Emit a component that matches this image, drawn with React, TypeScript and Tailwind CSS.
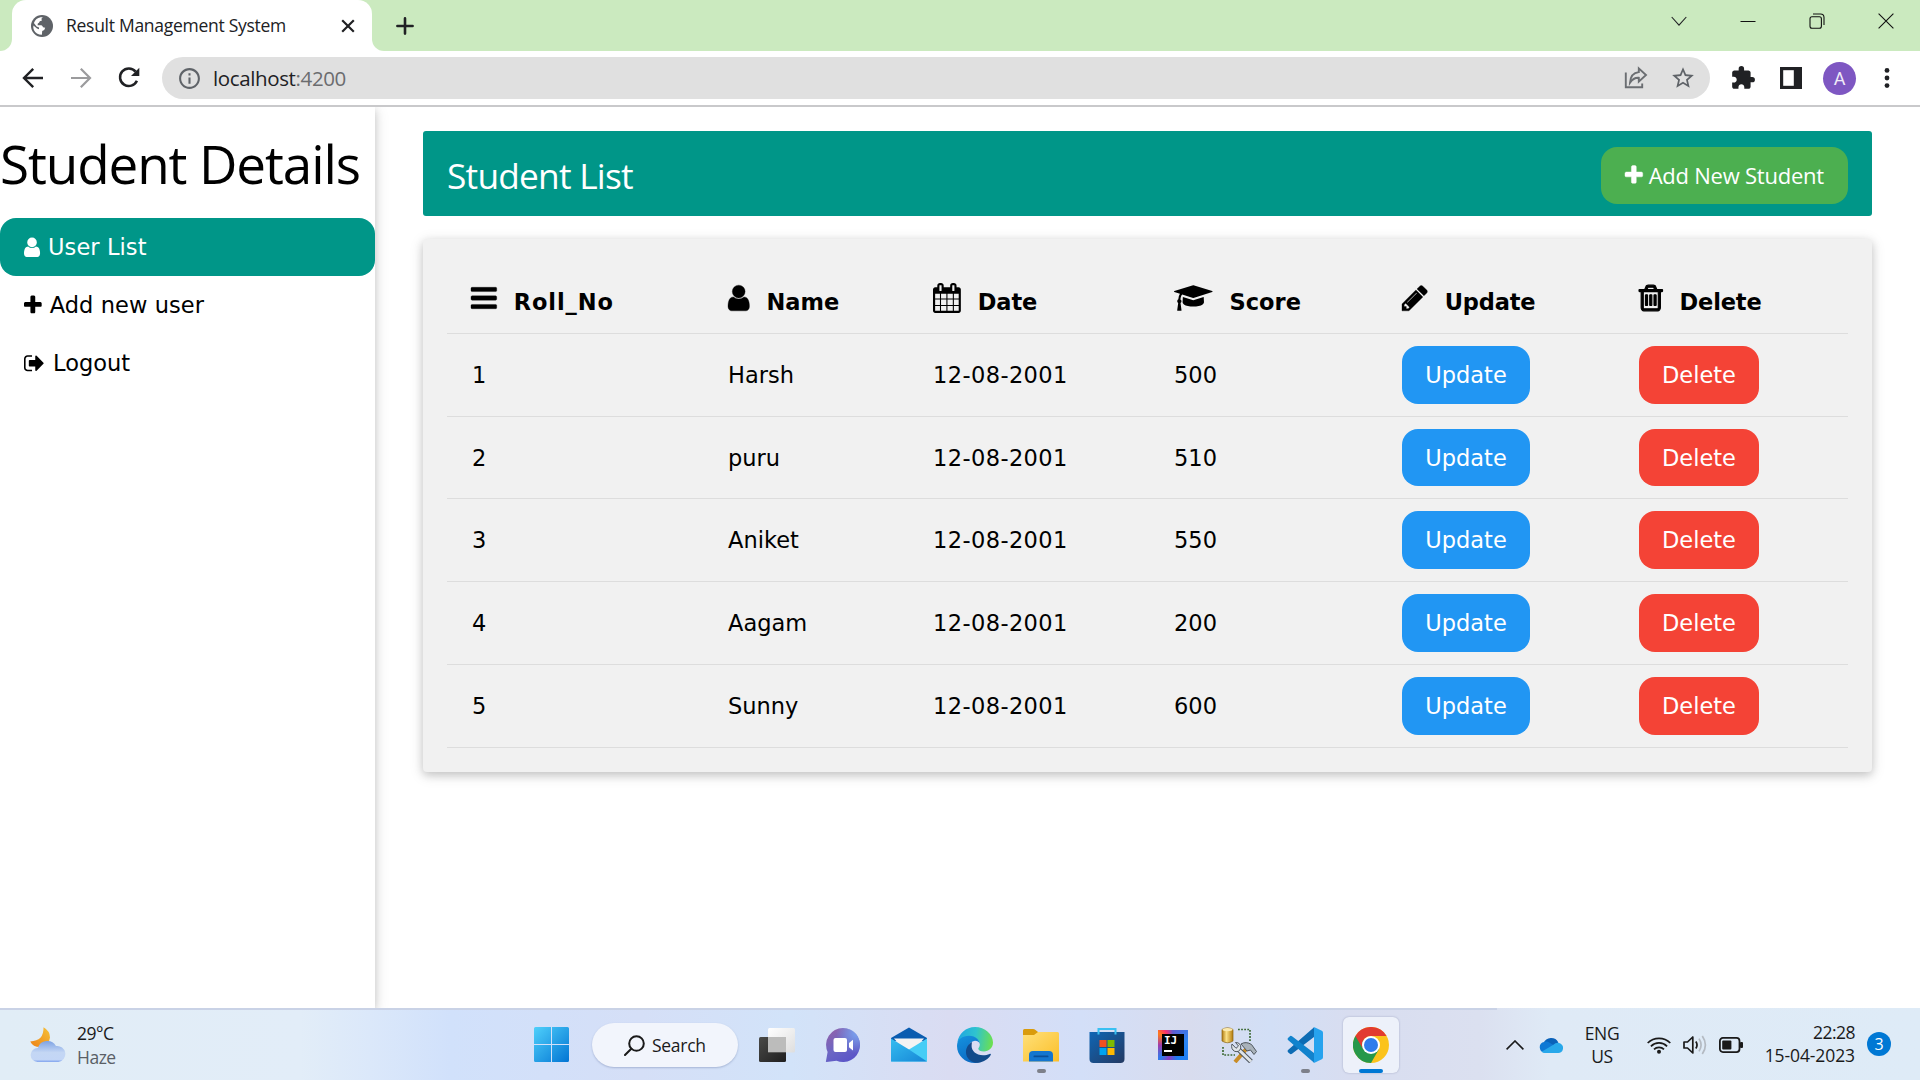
import React from "react";
import { MdExtension, MdStarBorder, MdInfoOutline } from "react-icons/md";

const P = {
  bars: "M1664 1344v128q0 26-19 45t-45 19h-1408q-26 0-45-19t-19-45v-128q0-26 19-45t45-19h1408q26 0 45 19t19 45zm0-512v128q0 26-19 45t-45 19h-1408q-26 0-45-19t-19-45v-128q0-26 19-45t45-19h1408q26 0 45 19t19 45zm0-512v128q0 26-19 45t-45 19h-1408q-26 0-45-19t-19-45v-128q0-26 19-45t45-19h1408q26 0 45 19t19 45z",
  user: "M1536 1399q0 109-62.5 187t-150.5 78h-854q-88 0-150.5-78t-62.5-187q0-85 8.5-160.5t31.5-152 58.5-131 94-89 134.5-34.5q131 128 313 128t313-128q76 0 134.5 34.5t94 89 58.5 131 31.5 152 8.5 160.5zm-256-887q0 159-112.5 271.5t-271.5 112.5-271.5-112.5-112.5-271.5 112.5-271.5 271.5-112.5 271.5 112.5 112.5 271.5z",
  plus: "M1600 736v192q0 40-28 68t-68 28h-416v416q0 40-28 68t-68 28h-192q-40 0-68-28t-28-68v-416h-416q-40 0-68-28t-28-68v-192q0-40 28-68t68-28h416v-416q0-40 28-68t68-28h192q40 0 68 28t28 68v416h416q40 0 68 28t28 68z",
  calendar: "M192 1664h288v-288h-288v288zm352 0h320v-288h-320v288zm-352-352h288v-320h-288v320zm352 0h320v-320h-320v320zm-352-384h288v-288h-288v288zm736 736h320v-288h-320v288zm-384-736h320v-288h-320v288zm768 736h288v-288h-288v288zm-384-352h320v-320h-320v320zm-352-864v-288q0-13-9.5-22.5t-22.5-9.5h-64q-13 0-22.5 9.5t-9.5 22.5v288q0 13 9.5 22.5t22.5 9.5h64q13 0 22.5-9.5t9.5-22.5zm736 864h288v-320h-288v320zm-384-384h320v-288h-320v288zm384 0h288v-288h-288v288zm32-480v-288q0-13-9.5-22.5t-22.5-9.5h-64q-13 0-22.5 9.5t-9.5 22.5v288q0 13 9.5 22.5t22.5 9.5h64q13 0 22.5-9.5t9.5-22.5zm384-64v1280q0 52-38 90t-90 38h-1408q-52 0-90-38t-38-90v-1280q0-52 38-90t90-38h128v-96q0-66 47-113t113-47h64q66 0 113 47t47 113v96h384v-96q0-66 47-113t113-47h64q66 0 113 47t47 113v96h128q52 0 90 38t38 90z",
  cap: "M1774 836l18 316q4 69-82 128t-235 93.5-323 34.5-323-34.5-235-93.5-82-128l18-316 574 181q22 7 48 7t48-7zm530-324q0 23-22 31l-1120 352q-4 1-10 1t-10-1l-652-206q-43 34-71 111.5t-34 178.5q63 36 63 109 0 69-58 107l58 433q2 14-8 25-9 11-24 11h-192q-15 0-24-11-10-11-8-25l58-433q-58-38-58-107 0-73 65-111 11-207 98-330l-333-104q-22-8-22-31t22-31l1120-352q4-1 10-1t10 1l1120 352q22 8 22 31z",
  pencil: "M491 1536l91-91-235-235-91 91v107h128v128h107zm523-928q0-22-22-22-10 0-17 7l-542 542q-7 7-7 17 0 22 22 22 10 0 17-7l542-542q7-7 7-17zm-54-192l416 416-832 832h-416v-416zm683 96q0 53-37 90l-166 166-416-416 166-165q36-38 90-38 53 0 91 38l235 234q37 39 37 91z",
  trash: "M704 736v576q0 14-9 23t-23 9h-64q-14 0-23-9t-9-23v-576q0-14 9-23t23-9h64q14 0 23 9t9 23zm256 0v576q0 14-9 23t-23 9h-64q-14 0-23-9t-9-23v-576q0-14 9-23t23-9h64q14 0 23 9t9 23zm256 0v576q0 14-9 23t-23 9h-64q-14 0-23-9t-9-23v-576q0-14 9-23t23-9h64q14 0 23 9t9 23zm128 724v-948h-896v948q0 22 7 40.5t14.5 27 10.5 8.5h832q3 0 10.5-8.5t14.5-27 7-40.5zm-672-1076h448l-48-117q-7-9-17-11h-317q-10 2-17 11zm928 32v64q0 14-9 23t-23 9h-96v948q0 83-47 143.5t-113 60.5h-832q-66 0-113-58.5t-47-141.5v-952h-96q-14 0-23-9t-9-23v-64q0-14 9-23t23-9h309l70-167q15-37 54-63t79-26h320q40 0 79 26t54 63l70 167h309q14 0 23 9t9 23z",
  signOut: "M704 1440q0 4 1 20t.5 26.5-3 23.5-10 19.5-20.5 6.5h-320q-119 0-203.5-84.5t-84.5-203.5v-704q0-119 84.5-203.5t203.5-84.5h320q13 0 22.5 9.5t9.5 22.5q0 4 1 20t.5 26.5-3 23.5-10 19.5-20.5 6.5h-320q-66 0-113 47t-47 113v704q0 66 47 113t113 47h312l11.5 1 11.5 3 8 5.5 7 9 2 13.5zm928-544q0 26-19 45l-544 544q-19 19-45 19t-45-19-19-45v-288h-448q-26 0-45-19t-19-45v-384q0-26 19-45t45-19h448v-288q0-26 19-45t45-19 45 19l544 544q19 19 19 45z",
};

const BOX: Record<keyof typeof P, [number, number]> = {
  bars: [128, 1536],
  user: [256, 1280],
  plus: [192, 1408],
  calendar: [64, 1664],
  cap: [0, 2304],
  pencil: [128, 1536],
  trash: [192, 1408],
  signOut: [64, 1600],
};

function Fa({ name, size, stroke = 0 }: { name: keyof typeof P; size: number; stroke?: number }) {
  const [x, w] = BOX[name];
  return (
    <svg
      viewBox={`${x} 0 ${w} 1792`}
      width={(w / 1792) * size}
      height={size}
      fill="currentColor"
      stroke="currentColor"
      strokeWidth={stroke}
      className="shrink-0 overflow-visible"
    >
      <path d={P[name]} />
    </svg>
  );
}

/* ---------- browser chrome ---------- */

function TabStrip() {
  return (
    <div className="flex h-[51px] bg-white">
      <div className="h-full w-3 rounded-br-[12px] bg-[#cbeabf]" />
      <div className="h-full w-[360px] bg-[linear-gradient(#cbeabf_50%,#fff_50%)]">
        <div className="flex h-full items-center rounded-t-[14px] bg-white pl-[19px] pr-[17px]">
          <svg width="22" height="22" viewBox="0 0 22 22">
            <circle cx="11" cy="11" r="11" fill="#5f6368" />
            <path d="M12.2 2.3 Q9.6 3.4 11 5.4 L8.8 6.2 Q8.2 8.2 6.8 8.6 L6.6 10.2 L10.4 10.2 Q11.6 10.8 12 12.2 L14.2 12.8 Q13.8 15.6 11.2 16 L10.9 19.7 Q5 19.7 2.9 15 Q2 12.5 2.4 10.6 L6 13.6 L8 14.2 L8 12.6 L5.6 11.6 L2.9 8 Q4.8 3 9.6 2.2Z" fill="#fff" />
            <path d="M14.8 3.2 L14 6.2 L12.6 7.6 L14.4 9.6 L17 9 L19.6 11.5 Q19.8 6.2 14.8 3.2Z" fill="#5f6368" />
          </svg>
          <span className="mb-px ml-[13px] whitespace-nowrap font-['Open_Sans'] text-[17.5px] leading-6 tracking-[-0.28px] text-[#202124]">
            Result Management System
          </span>
          <svg className="ml-auto" width="14" height="14" viewBox="0 0 14 14" stroke="#202124" strokeWidth="2.2">
            <path d="M1.2 1.2 L12.8 12.8 M12.8 1.2 L1.2 12.8" />
          </svg>
        </div>
      </div>
      <div className="flex h-full flex-1 items-center rounded-bl-[12px] bg-[#cbeabf] pl-6 pr-[26px]">
        <svg width="18" height="18" viewBox="0 0 18 18" stroke="#202124" strokeWidth="2.6" strokeLinecap="round">
          <path d="M9 1.4 V16.6 M1.4 9 H16.6" />
        </svg>
        <div className="mb-[9px] ml-auto flex items-center gap-[53px]">
          <svg width="16" height="16" viewBox="0 0 16 16" fill="none" stroke="#202124" strokeWidth="1.1">
            <path d="M.7 4 L8 12.2 L15.3 4" />
          </svg>
          <svg width="16" height="16" viewBox="0 0 16 16" stroke="#111" strokeWidth="1">
            <path d="M.5 8.5 H15.5" />
          </svg>
          <svg width="16" height="16" viewBox="0 0 16 16" fill="none" stroke="#111" strokeWidth="1.1">
            <rect x="1" y="3.8" width="11.4" height="11.4" rx="2" />
            <path d="M4 1 H11.5 Q15 1 15 4.5 V12" />
          </svg>
          <svg width="16" height="16" viewBox="0 0 16 16" stroke="#111" strokeWidth="1.1">
            <path d="M.6 .6 L15.4 15.4 M15.4 .6 L.6 15.4" />
          </svg>
        </div>
      </div>
    </div>
  );
}

function Toolbar() {
  return (
    <div className="flex h-14 items-center border-b-2 border-[#c9c9cb] bg-white pl-[22px] pr-[30px]">
      <svg width="22" height="22" viewBox="0 0 22 22" fill="none" stroke="#202124" strokeWidth="2.4">
        <path d="M21 11 H2.5 M11.2 1.8 L2 11 L11.2 20.2" />
      </svg>
      <svg className="ml-[27px]" width="22" height="22" viewBox="0 0 22 22" fill="none" stroke="#9b9b9d" strokeWidth="2.2">
        <path d="M0 11 H18.6 M9.8 1.8 L19 11 L9.8 20.2" />
      </svg>
      <svg className="ml-[25px]" width="22" height="22" viewBox="0 0 22 22" fill="none" stroke="#202124" strokeWidth="2.5">
        <path d="M17.6 4.6 A8.8 8.8 0 1 0 18.9 13.8" />
        <path d="M21.3 0.8 V9 H13 Z" fill="#202124" stroke="none" />
      </svg>
      <div className="ml-[22px] flex h-[42px] w-[1548px] items-center rounded-full bg-[#e0e0e0] pl-[15px] pr-[14px]">
        <MdInfoOutline size={25} color="#5f6368" />
        <span className="ml-[11px] font-['Open_Sans'] text-[20.5px] leading-7 tracking-[-0.37px] text-[#202124]">
          localhost<span className="text-[#6b6c6f]">:4200</span>
        </span>
        <svg className="ml-auto" width="24" height="24" viewBox="0 0 24 24" fill="none" stroke="#6b6e72" strokeWidth="1.9">
          <path d="M1.8 6.5 V21.2 H18.2 V17.5" />
          <path d="M14.8 2.4 L22 9 L14.8 15.6 V11.8 Q9.5 11.4 6 16.8 Q6.6 6.9 14.8 6.1 Z" strokeLinejoin="miter" />
        </svg>
        <MdStarBorder className="ml-[22px]" size={26} color="#5f6368" />
      </div>
      <MdExtension className="ml-5" size={26} color="#202124" />
      <svg className="ml-6" width="22" height="22" viewBox="0 0 22 22">
        <rect width="22" height="22" fill="#202124" />
        <rect x="3.2" y="3.2" width="10.6" height="15.6" fill="#fff" />
      </svg>
      <div className="ml-[21px] flex size-[33px] items-center justify-center rounded-full bg-[#7e57c2] pt-px font-['Roboto'] text-lg leading-none text-[#f1ecf8]">
        A
      </div>
      <svg className="ml-auto" width="6" height="22" viewBox="0 0 6 22" fill="#202124">
        <circle cx="3" cy="3.4" r="2.4" />
        <circle cx="3" cy="11" r="2.4" />
        <circle cx="3" cy="18.6" r="2.4" />
      </svg>
    </div>
  );
}

/* ---------- page ---------- */

function Sidebar() {
  return (
    <aside className="z-10 h-full w-[375px] shrink-0 bg-white shadow-[0_3px_8px_rgba(0,0,0,.16),0_3px_15px_rgba(0,0,0,.12)]">
      <h1 className="h-[111px] whitespace-nowrap pt-[19px] font-['Open_Sans'] text-[53px] leading-[76px] tracking-[-1.1px]">
        Student Details
      </h1>
      <nav className="text-[22.5px] leading-[58px]">
        <a className="flex h-[58px] items-center gap-2 rounded-[16px] bg-[#009688] pl-6 text-white">
          <Fa name="user" size={22.5} />
          <span className="tracking-[0.08px]">User List</span>
        </a>
        <a className="flex h-[58px] items-center gap-2 pl-6">
          <Fa name="plus" size={22.5} />
          <span className="tracking-[0.08px]">Add new user</span>
        </a>
        <a className="flex h-[58px] items-center gap-[9px] pl-6">
          <Fa name="signOut" size={22.5} />
          <span>Logout</span>
        </a>
      </nav>
    </aside>
  );
}

const HEADS: { icon: keyof typeof P; stroke: number; label: string; cls: string }[] = [
  { icon: "bars", stroke: 20, label: "Roll_No", cls: "tracking-[0.9px]" },
  { icon: "user", stroke: 20, label: "Name", cls: "" },
  { icon: "calendar", stroke: 0, label: "Date", cls: "tracking-[-0.15px]" },
  { icon: "cap", stroke: 0, label: "Score", cls: "" },
  { icon: "pencil", stroke: 20, label: "Update", cls: "tracking-[-0.15px]" },
  { icon: "trash", stroke: 66, label: "Delete", cls: "tracking-[-0.15px]" },
];

const ROWS = [
  { no: 1, name: "Harsh", score: 500, h: "h-[83px]", btn: "h-[58px]" },
  { no: 2, name: "puru", score: 510, h: "h-[82px]", btn: "h-[57px]" },
  { no: 3, name: "Aniket", score: 550, h: "h-[83px]", btn: "h-[58px]" },
  { no: 4, name: "Aagam", score: 200, h: "h-[83px]", btn: "h-[58px]" },
  { no: 5, name: "Sunny", score: 600, h: "h-[83px]", btn: "h-[58px]" },
];

const COLS = "grid grid-cols-[257px_205px_241px_228px_237px_1fr] border-b border-[#dddddd] pl-6";

function StudentTable() {
  return (
    <section className="mt-[23px] h-[533px] rounded-[4px] bg-[#f1f1f1] px-6 pt-[25px] text-[22.5px] shadow-[0_3px_8px_rgba(0,0,0,.16),0_3px_15px_rgba(0,0,0,.12)]">
      <div className={`${COLS} h-[70px] font-bold`}>
        {HEADS.map((h) => (
          <div key={h.label} className="flex items-start gap-[17px] pt-[19px]">
            <Fa name={h.icon} size={30} stroke={h.stroke} />
            <span className={`pt-0.5 leading-[34px] ${h.cls}`}>{h.label}</span>
          </div>
        ))}
      </div>
      {ROWS.map((r) => (
        <div key={r.no} className={`${COLS} ${r.h} items-center`}>
          <span className="pl-px pt-0.5">{r.no}</span>
          <span className="pt-0.5">{r.name}</span>
          <span className="pt-0.5 tracking-[0.4px]">12-08-2001</span>
          <span className="pt-0.5">{r.score}</span>
          <button className={`${r.btn} flex w-32 items-center justify-center rounded-[16px] bg-[#2196f3] pt-0.5 text-white`}>Update</button>
          <button className={`${r.btn} flex w-[120px] items-center justify-center rounded-[16px] bg-[#f44336] pt-0.5 text-white`}>Delete</button>
        </div>
      ))}
    </section>
  );
}

/* ---------- taskbar icons ---------- */

const WindowsLogo = () => (
  <svg width="36" height="36" viewBox="0 0 36 36">
    <defs>
      <linearGradient id="win" x1="0" y1="0" x2="1" y2="1">
        <stop offset="0" stopColor="#4fd0fb" />
        <stop offset="1" stopColor="#0072d2" />
      </linearGradient>
      <clipPath id="winc">
        <path d="M0 1.5Q0 0 1.5 0H17V17H0zM18 0H33.5Q35 0 35 1.5V17H18zM0 18H17V35H1.5Q0 35 0 33.5zM18 18H35V33.5Q35 35 33.5 35H18z" />
      </clipPath>
    </defs>
    <rect width="36" height="36" fill="url(#win)" clipPath="url(#winc)" />
  </svg>
);

const TaskView = () => (
  <svg width="36" height="36" viewBox="0 0 36 36">
    <defs>
      <linearGradient id="tvd" x1="0" y1="0" x2="1" y2="1">
        <stop offset="0" stopColor="#4a4a48" />
        <stop offset="1" stopColor="#1f1f1f" />
      </linearGradient>
      <linearGradient id="tvl" x1="0" y1="0" x2="1" y2="1">
        <stop offset="0" stopColor="#ffffff" />
        <stop offset="1" stopColor="#dedede" />
      </linearGradient>
    </defs>
    <rect x="9" y="1" width="27" height="24.5" rx="1.5" fill="url(#tvl)" />
    <rect x="0" y="10" width="27" height="25" rx="1.5" fill="url(#tvd)" />
    <rect x="9" y="10" width="18" height="15.3" fill="#bcbcbb" />
  </svg>
);

const Chat = () => (
  <svg width="36" height="36" viewBox="0 0 36 36">
    <defs>
      <linearGradient id="chat" x1=".1" y1=".1" x2=".7" y2="1">
        <stop offset="0" stopColor="#8f62ac" />
        <stop offset=".5" stopColor="#6b66c4" />
        <stop offset="1" stopColor="#5a54c8" />
      </linearGradient>
      <radialGradient id="chat2" cx=".9" cy=".15" r=".6">
        <stop offset="0" stopColor="#7aa2ef" />
        <stop offset="1" stopColor="#7aa2ef" stopOpacity="0" />
      </radialGradient>
    </defs>
    <path d="M18 1a17 17 0 1 1-6.5 32.7L1.5 35Q.5 35 1 34L2.6 25A17 17 0 0 1 18 1z" fill="url(#chat)" />
    <circle cx="18" cy="18" r="17" fill="url(#chat2)" />
    <rect x="8.5" y="11" width="13.5" height="14" rx="2" fill="#fff" />
    <path d="M24 16 L28 12.8 V23.4 L24 20.2z" fill="#fff" />
  </svg>
);

const Mail = () => (
  <svg width="36" height="36" viewBox="0 0 36 36">
    <defs>
      <linearGradient id="mail" x1="0" y1="0" x2="1" y2="1">
        <stop offset="0" stopColor="#35bdf0" />
        <stop offset="1" stopColor="#1686d6" />
      </linearGradient>
    </defs>
    <path d="M0 11 L18 .5 L36 11 V14 H0z" fill="#0a5cb0" />
    <path d="M3 11.5 H33 L20 26 H16z" fill="#f3f3f3" />
    <path d="M36 11.6 V34.5 L0 34.5 L18 22.5z" fill="#45cdf6" />
    <path d="M0 11.6 L18 22.5 L36 34.5 H0z" fill="url(#mail)" />
  </svg>
);

const Edge = () => (
  <svg width="36" height="36" viewBox="0 0 36 36">
    <defs>
      <linearGradient id="e1" x1="0" y1=".4" x2="1" y2=".5">
        <stop offset="0" stopColor="#1fa6e2" />
        <stop offset=".5" stopColor="#2fc3cf" />
        <stop offset="1" stopColor="#6ce04f" />
      </linearGradient>
      <linearGradient id="e2" x1="0" y1="0" x2=".4" y2="1">
        <stop offset="0" stopColor="#1593df" />
        <stop offset="1" stopColor="#0c6cc4" />
      </linearGradient>
    </defs>
    <path d="M.3 16 C1.5 6.5 9 0 18 0 C28 0 36 7.5 36 15.5 C36 21 31.5 24.5 27 24.5 C23.5 24.5 21.3 23.2 21.3 21.8 C21.3 20.8 22.8 20 22.8 17.3 C22.8 13.5 19 10 13.5 10 C7.5 10 2 12 .3 16z" fill="url(#e1)" />
    <path d="M0 19 C0 12.5 5.5 8.8 12 8.8 C19 8.8 22.8 13.4 22.8 17 C22.3 14.8 20 13.8 18 13.8 C12.8 14.3 10.4 19.5 11.4 24.3 C12.3 30.5 17.5 35 23 35.3 C21.5 35.8 19.6 36 18 36 C8 36 0 28.5 0 19z" fill="url(#e2)" />
    <path d="M15 15 C10.5 17.5 8.2 22.5 9.2 27.3 C10.4 33 16 36.2 21 35.8 C27 35 31.5 31.8 33.7 28 C34.2 27 33.6 26.5 32.6 26.9 C30.5 27.9 28 28.4 26 28.3 C19 28 14.6 24 14.6 19 C14.6 17.5 14.8 16.2 15 15z" fill="#114a8b" />
  </svg>
);

const Folder = () => (
  <svg width="36" height="36" viewBox="0 0 36 36">
    <defs>
      <linearGradient id="fo" x1="0" y1="0" x2="1" y2="1">
        <stop offset="0" stopColor="#ffe07a" />
        <stop offset="1" stopColor="#fbbf28" />
      </linearGradient>
    </defs>
    <path d="M0 3.5Q0 2 1.5 2H10Q11.5 2 12.5 3L15 5H34V12H0z" fill="#d99b0c" />
    <path d="M0 8H11L15 5H34.5Q36 5 36 6.5V34.5H0z" fill="url(#fo)" />
    <path d="M6 34.5V28Q6 24 10 24H26Q30 24 30 28V34.5z" fill="#1476cf" />
    <rect x="10.5" y="28.5" width="15" height="1.8" rx=".9" fill="#0a4f98" />
  </svg>
);

const Store = () => (
  <svg width="36" height="36" viewBox="0 0 36 36">
    <defs>
      <linearGradient id="st" x1="0" y1="0" x2="1" y2="1">
        <stop offset="0" stopColor="#0f66b5" />
        <stop offset="1" stopColor="#243a63" />
      </linearGradient>
    </defs>
    <path d="M0.5 5H35.5V32Q35.5 36 31.5 36H4.5Q.5 36 .5 32z" fill="url(#st)" />
    <path d="M9.5 7.5V2H26.5V7.5" fill="none" stroke="#39c0f2" strokeWidth="2" />
    <rect x="10.5" y="13" width="7" height="7" fill="#f25022" />
    <rect x="18.5" y="13" width="7" height="7" fill="#7fba00" />
    <rect x="10.5" y="21" width="7" height="7" fill="#00a4ef" />
    <rect x="18.5" y="21" width="7" height="7" fill="#ffb900" />
  </svg>
);

const IntelliJ = () => (
  <div className="grid size-[30px] place-items-center bg-[conic-gradient(from_0deg,#5d5bd0,#2c86f5_20%,#1c7cf2_45%,#8a3cc4_55%,#2a7df0_62%,#a33aa8_75%,#ff7a1a_86%,#fc2f6d_92%,#5d5bd0)]">
    <div className="flex size-[22px] flex-col bg-black pl-[2px] pt-px font-['DejaVu_Sans_Mono'] text-[11px] font-bold leading-[12px] text-white">
      <span>IJ</span>
      <span className="mt-[3px] h-[2px] w-[8px] bg-white" />
    </div>
  </div>
);

const DbTools = () => (
  <svg width="36" height="36" viewBox="0 0 36 36">
    <defs>
      <linearGradient id="db" x1="0" x2="1">
        <stop offset="0" stopColor="#b07a12" />
        <stop offset=".4" stopColor="#fbe187" />
        <stop offset="1" stopColor="#b57c0e" />
      </linearGradient>
    </defs>
    <path d="M1 2.5Q6.5-1 12 2.5V14Q6.5 17.5 1 14z" fill="url(#db)" stroke="#8a6414" strokeWidth=".7" />
    <ellipse cx="6.5" cy="2.6" rx="5" ry="1.7" fill="#fbeab0" />
    <path d="M17 2.5H29V15M2 20V28H14" fill="none" stroke="#3e6a35" strokeWidth="1.7" strokeDasharray="1.8 1.3" />
    <path d="M27 20 L14 35" stroke="#c98d26" strokeWidth="4" />
    <path d="M20 17Q25 14 30.5 17.5L35.5 24.5L33 27.5L29.5 23L26 24z" fill="#a9b2ba" stroke="#4f575e" strokeWidth="1" />
    <path d="M16 21 L30 34.5" stroke="#4f575e" strokeWidth="5" />
    <path d="M16 21 L30 34.5" stroke="#dfe4e8" strokeWidth="3" />
    <path d="M11 17L15 21.3L17.5 19L14.5 15.5Q20 15.5 19.8 21Q18.5 25.5 13.8 24.4Q9.5 22 11 17z" fill="#dfe4e8" stroke="#4f575e" strokeWidth="1" />
  </svg>
);

const VsCode = () => (
  <svg width="36" height="36" viewBox="0 0 36 36">
    <path d="M35 5.2 L26.8 .5 L1 23 Q0 24 1 25.2 L3.2 27 Q4 27.4 5 26.8 L27 10z" fill="#0e6cb4" />
    <path d="M1 13 Q0 12 1 10.9 L3.2 9 Q4 8.6 5 9.2 L27 26 L35 31 L26.8 35.5z" fill="#1283cd" />
    <path d="M26.4 35.8 Q27 36 28 35.6 L34.8 32.3 Q36 31.6 36 30.3 V5.7 Q36 4.4 34.8 3.7 L28 .4 Q27 0 26.4 .2 Q27 .6 27 1.6 V34.4 Q27 35.4 26.4 35.8z" fill="#27a3ee" />
  </svg>
);

const Chrome = () => (
  <svg width="36" height="36" viewBox="0 0 36 36">
    <circle cx="18" cy="18" r="18" fill="#fbc31c" />
    <path d="M18 18 L2.4 9 A18 18 0 0 0 18 36 L25.8 22.5z" fill="#26984a" />
    <path d="M2.4 9 A18 18 0 0 1 33.6 9 H18 A9 9 0 0 0 10.2 22.5z" fill="#e23b30" />
    <circle cx="18" cy="18" r="9" fill="#fff" />
    <circle cx="18" cy="18" r="7" fill="#2f7cec" />
  </svg>
);

const Moon = () => (
  <svg width="36" height="36" viewBox="0 0 36 36">
    <defs>
      <linearGradient id="mo" x1="1" y1="0" x2="0" y2="1">
        <stop offset="0" stopColor="#f5c23a" />
        <stop offset="1" stopColor="#ee8216" />
      </linearGradient>
      <linearGradient id="cl" x1="0" y1="0" x2="0" y2="1">
        <stop offset="0" stopColor="#7ea3e4" />
        <stop offset=".55" stopColor="#c4d7f4" />
        <stop offset=".88" stopColor="#c3d6f6" />
        <stop offset="1" stopColor="#7fa3ee" />
      </linearGradient>
    </defs>
    <path d="M13.5 .3 Q20 4 20 10.5 Q19 19 10 20 Q3 20 .2 14.4 Q14 14 13.5 .3z" fill="url(#mo)" />
    <path d="M7.5 35 A7 7 0 0 1 7.8 21 A10 10 0 0 1 26 19 A8 8 0 1 1 28.5 35z" fill="url(#cl)" />
  </svg>
);

const APPS: { id: string; icon: React.ReactNode; run?: boolean; active?: boolean }[] = [
  { id: "task", icon: <TaskView /> },
  { id: "chat", icon: <Chat /> },
  { id: "mail", icon: <Mail /> },
  { id: "edge", icon: <Edge /> },
  { id: "folder", icon: <Folder />, run: true },
  { id: "store", icon: <Store /> },
  { id: "ij", icon: <IntelliJ /> },
  { id: "db", icon: <DbTools /> },
  { id: "code", icon: <VsCode />, run: true },
  { id: "chrome", icon: <Chrome />, active: true },
];

function Taskbar() {
  return (
    <footer className="flex h-[72px] flex-col bg-[linear-gradient(90deg,#e1edf6_0,#e2edf8_300px,#dbe8fa_370px,#d1e1fb_450px,#d5dff7_640px,#d2e3f9_790px,#dadcf2_950px,#d3dff8_1080px,#d8dcee_1190px,#d2dff6_1270px,#d8ddf0_1350px,#dbe0f0_1480px,#dfeaf6_1550px,#deebf7_1920px)] font-['Open_Sans'] text-[17.5px] text-[#1a1a1a]">
      <div className="h-[2px] w-[1497px] bg-[#c9d2e6]" />
      <div className="flex flex-1 items-center">
        <div className="flex w-[534px] items-center pl-[30px]">
          <Moon />
          <div className="ml-[11px] flex flex-col leading-6 tracking-[-0.5px]">
            <span>29°C</span>
            <span className="text-[#5a5f66]">Haze</span>
          </div>
        </div>
        <WindowsLogo />
        <div className="ml-[22px] mr-[6px] flex h-11 w-[146px] items-center rounded-full bg-[#f2f5fc] pl-8 shadow-[0_1px_2px_rgba(80,100,150,.35)]">
          <svg width="21" height="21" viewBox="0 0 21 21" fill="none" stroke="#1a1a1a" strokeWidth="2">
            <circle cx="12.5" cy="8.5" r="7.3" />
            <path d="M7.3 13.7 L1 20" strokeLinecap="round" />
          </svg>
          <span className="ml-[7px] tracking-[-0.28px]">Search</span>
        </div>
        {APPS.map((a) => (
          <div key={a.id} className="flex h-full w-[66px] flex-col items-center pt-[7px]">
            <div
              className={
                a.active
                  ? "flex h-14 w-14 flex-col items-center rounded-md bg-[#edf1fa] pt-[10px] shadow-[0_0_2px_rgba(90,100,140,.45)]"
                  : "flex h-14 w-14 flex-col items-center pt-[10px]"
              }
            >
              <div className="flex size-9 items-center justify-center">{a.icon}</div>
              {a.active && <div className="mt-[6px] h-[5px] w-6 rounded-full bg-[#0078d4]" />}
              {a.run && <div className="mt-[6px] h-[5px] w-[9px] rounded-full bg-[#7d808a]" />}
            </div>
          </div>
        ))}
        <svg className="ml-[102px]" width="18" height="10" viewBox="0 0 18 10" fill="none" stroke="#1a1a1a" strokeWidth="1.6">
          <path d="M.6 9.4 L9 1 L17.4 9.4" />
        </svg>
        <svg className="ml-[15px]" width="24" height="16" viewBox="0 0 24 16">
          <path d="M4.5 6 A8.2 8.2 0 0 1 19.4 5.4 L12 11z" fill="#0a62b9" />
          <path d="M5.3 4.9 Q8 4 11 6 L16 9 L6 15.6 H5.5 A5.4 5.4 0 0 1 5.3 4.9z" fill="#0f78d4" />
          <path d="M2.6 14.7 L14 8 Q18 4.5 21.4 6.6 A5 5 0 0 1 19.2 16 H6 Q4 16 2.6 14.7z" fill="#28a8ea" />
        </svg>
        <div className="ml-[21px] flex w-9 flex-col items-center leading-[23px] tracking-[-0.4px]">
          <span>ENG</span>
          <span>US</span>
        </div>
        <svg className="ml-[27px]" width="24" height="18" viewBox="0 0 24 18" fill="none" stroke="#1a1a1a" strokeWidth="1.7">
          <path d="M.7 7 A16 16 0 0 1 23.3 7" />
          <path d="M3.9 10.3 A11.5 11.5 0 0 1 20.1 10.3" />
          <path d="M7 13.4 A7 7 0 0 1 17 13.4" />
          <circle cx="12" cy="15.7" r="2" fill="#1a1a1a" stroke="none" />
        </svg>
        <svg className="ml-3" width="24" height="20" viewBox="0 0 24 20" fill="none" stroke="#1a1a1a" strokeWidth="1.7">
          <path d="M1 7 H4.5 L9.8 2 V18 L4.5 13 H1z" strokeLinejoin="round" />
          <path d="M12.8 6.5 Q15.3 10 12.8 13.5" />
          <path d="M16 3.6 Q20.2 10 16 16.4 M19.3 1 Q25.5 10 19.3 19" stroke="#b4bac2" />
        </svg>
        <svg className="ml-3" width="24" height="16" viewBox="0 0 24 16">
          <rect x=".9" y=".9" width="19.6" height="14.2" rx="3" fill="none" stroke="#1a1a1a" strokeWidth="1.8" />
          <rect x="3.2" y="3.4" width="9.2" height="9.2" rx="1" fill="#1a1a1a" />
          <rect x="21" y="5" width="3" height="6" rx="1" fill="#1a1a1a" />
        </svg>
        <div className="mb-[2px] flex w-[112px] flex-col items-end leading-[23px]">
          <span className="tracking-[-0.5px]">22:28</span>
          <span className="tracking-[-0.1px]">15-04-2023</span>
        </div>
        <div className="mb-[2px] ml-3 flex size-6 items-center justify-center rounded-full bg-[#0078d4] text-[16px] leading-none text-white">3</div>
      </div>
    </footer>
  );
}

export default function App() {
  return (
    <div className="flex h-[1080px] w-[1920px] flex-col overflow-hidden bg-white font-['DejaVu_Sans'] text-black">
      <TabStrip />
      <Toolbar />
      <div className="flex min-h-0 flex-1 overflow-hidden">
        <Sidebar />
        <main className="flex-1 px-12 pt-6">
          <header className="flex h-[85px] items-start justify-between rounded-[3px] bg-[#009688] px-6 font-['Open_Sans'] text-white">
            <h2 className="pt-[19px] text-[35.3px] leading-[50px] tracking-[-0.78px]">Student List</h2>
            <button className="mt-4 flex h-[57px] w-[247px] items-center gap-[6px] rounded-[16px] bg-[#4caf50] pl-6 text-[22px] tracking-[-0.24px]">
              <Fa name="plus" size={22.5} stroke={36} />
              <span>Add New Student</span>
            </button>
          </header>
          <StudentTable />
        </main>
      </div>
      <Taskbar />
    </div>
  );
}
